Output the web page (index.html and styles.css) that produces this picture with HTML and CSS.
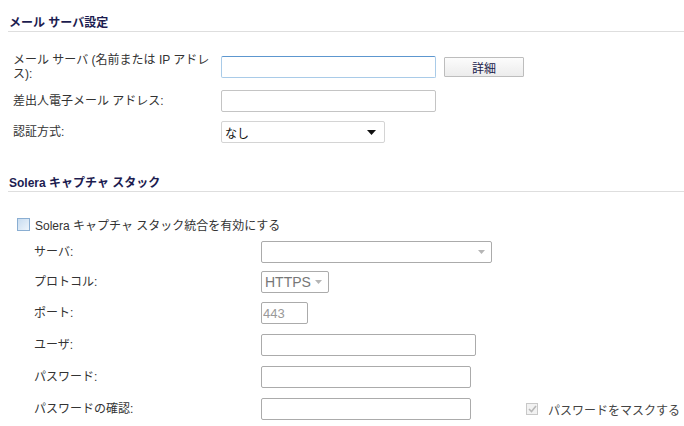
FILE: index.html
```html
<!DOCTYPE html>
<html lang="ja">
<head>
<meta charset="utf-8">
<link rel="stylesheet" href="styles.css">
</head>
<body>
<section class="sec sec-mail">
  <h2 class="sec-title">メール サーバ設定</h2>
  <div class="row row-tall">
    <label class="lbl">メール サーバ (名前または IP アドレ<br>ス):</label>
    <input class="field field-focus w215" type="text">
    <button class="btn">詳細</button>
  </div>
  <div class="row">
    <label class="lbl">差出人電子メール アドレス:</label>
    <input class="field w215" type="text">
  </div>
  <div class="row">
    <label class="lbl">認証方式:</label>
    <div class="sel w164"><span class="sel-text">なし</span>
      <svg class="arrow" width="9" height="5" viewBox="0 0 9 5"><path d="M0 0h9L4.5 5z" fill="#111"/></svg>
    </div>
  </div>
</section>

<section class="sec sec-solera">
  <h2 class="sec-title">Solera キャプチャ スタック</h2>
  <div class="row chk-row">
    <span class="chk"></span>
    <span class="chk-label">Solera キャプチャ スタック統合を有効にする</span>
  </div>
  <div class="row r2 m6">
    <label class="lbl2">サーバ:</label>
    <div class="sel dis w231"><span class="sel-text"></span>
      <svg class="arrow" width="7" height="4" viewBox="0 0 7 4"><path d="M0 0h7L3.5 4z" fill="#b5b5b5"/></svg>
    </div>
  </div>
  <div class="row r2 m8">
    <label class="lbl2">プロトコル:</label>
    <div class="sel dis w68"><span class="sel-text proto">HTTPS</span>
      <svg class="arrow" width="7" height="4" viewBox="0 0 7 4"><path d="M0 0h7L3.5 4z" fill="#b5b5b5"/></svg>
    </div>
  </div>
  <div class="row r2 m9">
    <label class="lbl2">ポート:</label>
    <input class="field w47 port" type="text" value="443" disabled>
  </div>
  <div class="row r2 m10">
    <label class="lbl2">ユーザ:</label>
    <input class="field w215" type="text">
  </div>
  <div class="row r2 m10">
    <label class="lbl2">パスワード:</label>
    <input class="field w210" type="password">
  </div>
  <div class="row r2 m10">
    <label class="lbl2">パスワードの確認:</label>
    <input class="field w210" type="password">
    <span class="mask">
      <span class="chk chk-dis">
        <svg width="9" height="8" viewBox="0 0 9 8"><path d="M1 4l2.5 2.5L8 1" fill="none" stroke="#b8b8b8" stroke-width="1.6"/></svg>
      </span>
      <span class="mask-label">パスワードをマスクする</span>
    </span>
  </div>
</section>
</body>
</html>
```

FILE: styles.css
```css
* { box-sizing: border-box; }
html, body { margin: 0; padding: 0; background: #fff; }
body {
  width: 684px;
  height: 426px;
  overflow: hidden;
  font-family: "Liberation Sans", "Noto Sans CJK JP", sans-serif;
  font-size: 12px;
  color: #333;
}
.sec { margin-left: 8px; }
.sec-title {
  margin: 0;
  padding-left: 1px;
  font-size: 12px;
  font-weight: bold;
  line-height: 16px;
  color: #1c1c50;
  border-bottom: 1px solid #dedede;
}
.sec-mail { padding-top: 15px; }
.sec-solera { margin-top: 32px; }

.row { display: flex; align-items: center; height: 22px; margin-top: 9px; }
.sec-mail .row-tall { height: 28px; margin-top: 21px; margin-bottom: 1px; }
.lbl { width: 213px; padding-left: 5px; line-height: 14px; flex: none; }
.lbl2 { width: 253px; padding-left: 26px; flex: none; line-height: 14px; }

.field {
  height: 22px;
  border: 1px solid #c4c4c4;
  border-radius: 2px;
  background: #fff;
  padding: 0 3px;
  font: inherit;
  flex: none;
  outline: none;
}
.field-focus {
  border-color: #a9cbe8;
  border-top-color: #5d97cf;
}
.w215 { width: 215px; }
.w210 { width: 210px; }
.w164 { width: 164px; }
.w231 { width: 231px; }
.w68 { width: 68px; }
.w47 { width: 47px; }

.btn {
  margin-left: 8px;
  width: 80px;
  height: 20px;
  border: 1px solid #bdbdbd;
  border-radius: 1px;
  background: linear-gradient(#fcfcfc, #ececec);
  font: inherit;
  color: #20204a;
  padding: 0;
  align-self: flex-start;
  margin-top: 4px;
}

.sel {
  height: 22px;
  border: 1px solid #d4d4d4;
  border-radius: 2px;
  display: flex;
  align-items: center;
  justify-content: space-between;
  padding: 0 8px 0 3px;
  flex: none;
  background: #fff;
}
.sel-text { color: #111; }
.sel.dis { border-color: #ababab; padding-right: 6px; }
.proto { color: #777; font-family: "Liberation Sans", sans-serif; font-size: 14px; }
.port { color: #999; font-family: "Liberation Sans", sans-serif; font-size: 13px; padding: 0 1px; border-color: #ababab; background: #fff; }
.r2 .field:not(.port) { border-color: #ababab; }

.chk-row { height: 22px; margin-top: 21px; }
.chk {
  display: inline-block;
  width: 13px;
  height: 13px;
  border: 1px solid #8aaed2;
  background: linear-gradient(135deg, #c8dcf0, #eef5fc);
  margin-left: 9px;
  flex: none;
}
.chk-label { margin-left: 5px; }

.m6 { margin-top: 6px; }
.m8 { margin-top: 8px; }
.m9 { margin-top: 9px; }
.m10 { margin-top: 10px; }

.mask { display: flex; align-items: center; margin-left: 55px; }
.chk-dis {
  margin-left: 0;
  border-color: #c8c8c8;
  background: #f2f2f2;
  display: flex;
  align-items: center;
  justify-content: center;
  width: 12px;
  height: 12px;
}
.mask-label { margin-left: 10px; color: #444; }
```
